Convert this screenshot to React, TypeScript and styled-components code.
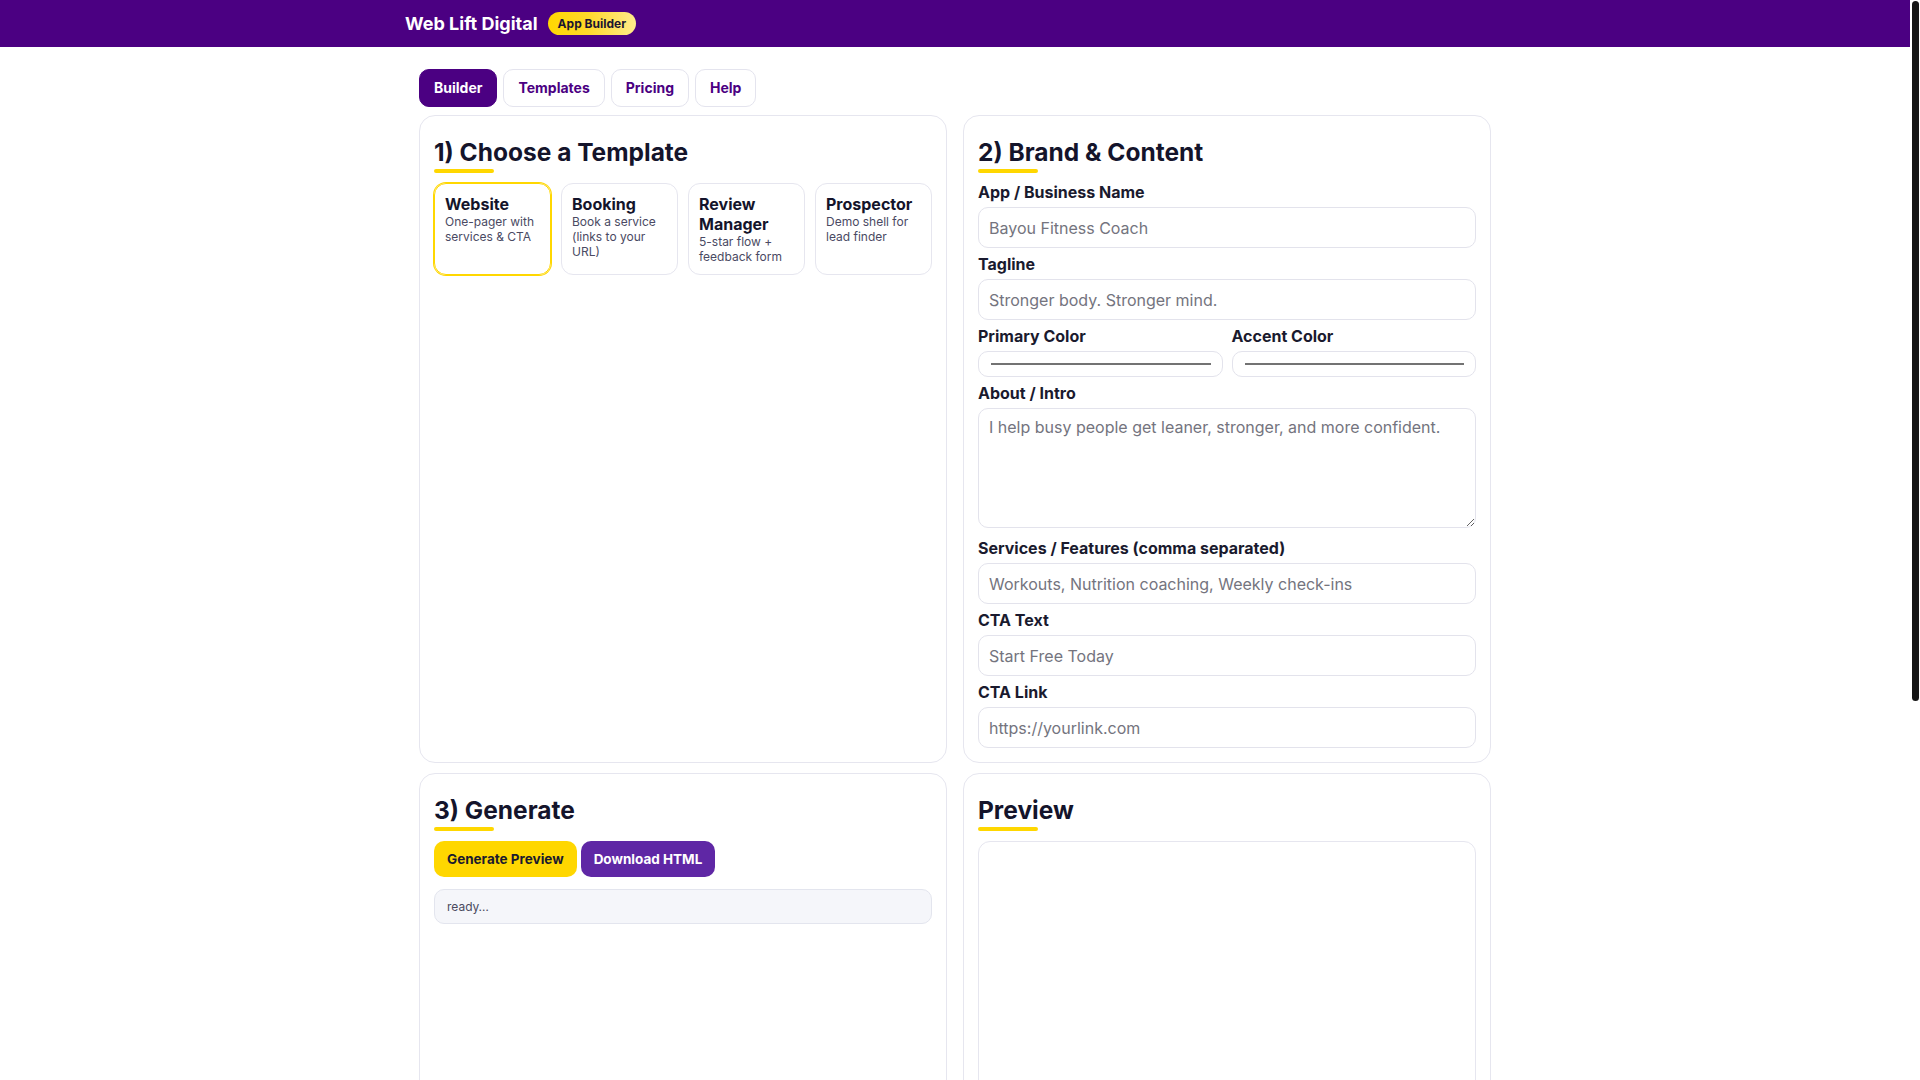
import React from "react";
import styled, { createGlobalStyle, css } from "styled-components";

const Global = createGlobalStyle`
  * { box-sizing: border-box; }
  html, body { margin: 0; padding: 0; background: #ffffff; }
  body {
    padding-right: 10px;
    font-family: Inter, "Noto Sans", "Liberation Sans", Arial, sans-serif;
    color: #14142b;
    -webkit-font-smoothing: antialiased;
  }
`;

const ScrollThumb = styled.div`
  position: fixed;
  top: 1px;
  right: 1px;
  width: 7px;
  height: 700px;
  border-radius: 4px;
  background: #151515;
`;

const Header = styled.header`
  background: #4b0082;
  height: 47px;
`;

const HeaderInner = styled.div`
  max-width: 1100px;
  margin: 0 auto;
  height: 100%;
  display: flex;
  align-items: center;
  gap: 10px;
`;

const Brand = styled.div`
  color: #ffffff;
  font-size: 18px;
  font-weight: 700;
`;

const Badge = styled.span`
  display: inline-flex;
  align-items: center;
  height: 23px;
  padding: 0 10px;
  border-radius: 999px;
  background: linear-gradient(90deg, #ffd700 0%, #ffd92a 45%, #ffeb8c 100%);
  color: #1b1530;
  font-size: 12px;
  font-weight: 700;
`;

const Main = styled.main`
  max-width: 1100px;
  margin: 0 auto;
  padding: 22px 14px 44px;
`;

const Tabs = styled.nav`
  display: flex;
  gap: 6px;
  margin-bottom: 8px;
`;

const Tab = styled.button<{ $active?: boolean }>`
  font-family: inherit;
  font-size: 14px;
  font-weight: 700;
  line-height: 18px;
  padding: 9px 14px;
  border-radius: 10px;
  border: 1px solid ${(p) => (p.$active ? "#4b0082" : "#e4e4ee")};
  background: ${(p) => (p.$active ? "#4b0082" : "#ffffff")};
  color: ${(p) => (p.$active ? "#ffffff" : "#4b0082")};
  cursor: pointer;
`;

const Grid = styled.div`
  display: grid;
  grid-template-columns: 1fr 1fr;
  column-gap: 16px;
  row-gap: 10px;
`;

const Card = styled.section`
  border: 1px solid #e6e6ef;
  border-radius: 16px;
  padding: 14px;
  background: #ffffff;
`;

const Title = styled.h2`
  font-size: 24.5px;
  font-weight: 700;
  line-height: 30px;
  margin: 7px 0 2px;
  color: #14142b;
`;

const Underline = styled.div`
  width: 60px;
  height: 4px;
  border-radius: 3px;
  background: #ffd700;
  margin-bottom: 10px;
`;

const TemplateGrid = styled.div`
  display: grid;
  grid-template-columns: repeat(4, 1fr);
  gap: 10px;
`;

const TemplateCard = styled.div<{ $selected?: boolean }>`
  border: 1px solid ${(p) => (p.$selected ? "#ffd700" : "#e6e6ef")};
  border-radius: 12px;
  padding: 10px;
  min-height: 91px;
  cursor: pointer;
  ${(p) =>
    p.$selected &&
    css`
      box-shadow: 0 0 0 1px #ffd700;
    `}
`;

const TemplateName = styled.div`
  font-size: 16px;
  font-weight: 700;
  line-height: 20px;
  color: #14142b;
`;

const TemplateDesc = styled.div`
  font-size: 12px;
  line-height: 15px;
  color: #4a4a63;
`;

const Label = styled.label`
  display: block;
  font-size: 16px;
  font-weight: 700;
  line-height: 19px;
  color: #1a1a2e;
  margin: 7px 0 5px;
  ${Underline} + & {
    margin-top: 0;
  }
`;

const fieldBase = css`
  display: block;
  width: 100%;
  font-family: inherit;
  font-size: 16px;
  color: #14142b;
  border: 1px solid #e3e3ec;
  border-radius: 10px;
  background: #ffffff;
  outline: none;
  &::placeholder {
    color: #74747e;
  }
`;

const Input = styled.input`
  ${fieldBase};
  height: 41px;
  padding: 0 10px;
`;

const TextArea = styled.textarea`
  ${fieldBase};
  height: 120px;
  padding: 9px 10px;
  line-height: 19px;
  resize: vertical;
  margin-bottom: 11px;
`;

const ColorRow = styled.div`
  display: grid;
  grid-template-columns: 1fr 1fr;
  gap: 9px;
`;

const ColorField = styled.div`
  height: 26px;
  border: 1px solid #e3e3ec;
  border-radius: 10px;
  padding: 0 11px 0 12px;
  display: flex;
  align-items: center;
  cursor: pointer;
`;

const ColorSwatch = styled.div`
  flex: 1;
  height: 2px;
  background: #737373;
`;

const FieldBlock = styled.div``;

const ButtonRow = styled.div`
  display: flex;
  gap: 4px;
  margin-bottom: 12px;
`;

const ActionButton = styled.button<{ $variant: "yellow" | "purple" }>`
  font-family: inherit;
  font-size: 13.5px;
  font-weight: 700;
  line-height: 18px;
  padding: 9px 13px;
  border: none;
  border-radius: 10px;
  cursor: pointer;
  background: ${(p) => (p.$variant === "yellow" ? "#ffd700" : "#5f27a5")};
  color: ${(p) => (p.$variant === "yellow" ? "#1a1a2e" : "#ffffff")};
`;

const StatusBox = styled.div`
  border: 1px solid #e3e5ee;
  background: #f5f6fa;
  border-radius: 10px;
  padding: 8px 12px;
  font-size: 12px;
  line-height: 17px;
  color: #4b4b5f;
`;

const PreviewFrame = styled.div`
  border: 1px solid #e6e6ef;
  border-radius: 12px;
  height: 760px;
  background: #ffffff;
`;

const templates = [
  { name: "Website", desc: "One-pager with services & CTA", selected: true },
  { name: "Booking", desc: "Book a service (links to your URL)" },
  { name: "Review Manager", desc: "5-star flow + feedback form" },
  { name: "Prospector", desc: "Demo shell for lead finder" },
];

export default function App() {
  return (
    <>
      <Global />
      <Header>
        <HeaderInner>
          <Brand>Web Lift Digital</Brand>
          <Badge>App Builder</Badge>
        </HeaderInner>
      </Header>
      <Main>
        <Tabs>
          <Tab $active>Builder</Tab>
          <Tab>Templates</Tab>
          <Tab>Pricing</Tab>
          <Tab>Help</Tab>
        </Tabs>
        <Grid>
          <Card>
            <Title>1) Choose a Template</Title>
            <Underline />
            <TemplateGrid>
              {templates.map((t) => (
                <TemplateCard key={t.name} $selected={t.selected}>
                  <TemplateName>{t.name}</TemplateName>
                  <TemplateDesc>{t.desc}</TemplateDesc>
                </TemplateCard>
              ))}
            </TemplateGrid>
          </Card>
          <Card>
            <Title>2) Brand &amp; Content</Title>
            <Underline />
            <Label>App / Business Name</Label>
            <Input placeholder="Bayou Fitness Coach" />
            <Label>Tagline</Label>
            <Input placeholder="Stronger body. Stronger mind." />
            <ColorRow>
              <FieldBlock>
                <Label>Primary Color</Label>
                <ColorField>
                  <ColorSwatch />
                </ColorField>
              </FieldBlock>
              <FieldBlock>
                <Label>Accent Color</Label>
                <ColorField>
                  <ColorSwatch />
                </ColorField>
              </FieldBlock>
            </ColorRow>
            <Label>About / Intro</Label>
            <TextArea placeholder="I help busy people get leaner, stronger, and more confident." />
            <Label>Services / Features (comma separated)</Label>
            <Input placeholder="Workouts, Nutrition coaching, Weekly check-ins" />
            <Label>CTA Text</Label>
            <Input placeholder="Start Free Today" />
            <Label>CTA Link</Label>
            <Input placeholder="https://yourlink.com" />
          </Card>
          <Card>
            <Title>3) Generate</Title>
            <Underline />
            <ButtonRow>
              <ActionButton $variant="yellow">Generate Preview</ActionButton>
              <ActionButton $variant="purple">Download HTML</ActionButton>
            </ButtonRow>
            <StatusBox>ready…</StatusBox>
          </Card>
          <Card>
            <Title>Preview</Title>
            <Underline />
            <PreviewFrame />
          </Card>
        </Grid>
      </Main>
      <ScrollThumb />
    </>
  );
}
